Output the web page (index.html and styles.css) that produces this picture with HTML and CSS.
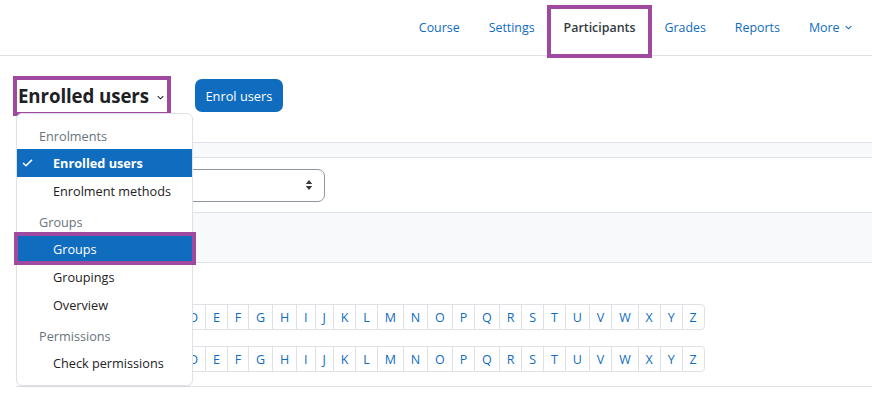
FILE: index.html
```html
<!DOCTYPE html>
<html lang="en">
<head>
<meta charset="utf-8">
<title>Participants</title>
<link rel="stylesheet" href="styles.css">
</head>
<body>
<header class="topbar">
  <nav class="secnav">
    <a class="navlink">Course</a>
    <a class="navlink">Settings</a>
    <a class="navlink active hl">Participants</a>
    <a class="navlink">Grades</a>
    <a class="navlink">Reports</a>
    <a class="navlink more">More <svg class="chev" viewBox="0 0 8 5" width="7" height="5"><path d="M0.8 0.8 L4 4 L7.2 0.8" fill="none" stroke="currentColor" stroke-width="1.2"/></svg></a>
  </nav>
</header>
<main class="page">
  <div class="tertiary">
    <div class="urlselect">
      <div class="heading-select hl">
        <h2 class="title">Enrolled users</h2>
        <svg class="chev dark" viewBox="0 0 8 5" width="7" height="5"><path d="M0.8 0.8 L4 4 L7.2 0.8" fill="none" stroke="currentColor" stroke-width="1.2"/></svg>
      </div>
      <div class="menu">
        <div class="menu-header">Enrolments</div>
        <a class="menu-item active"><svg class="check" viewBox="0 0 12 9" width="11" height="8"><path d="M1 4.5 L4.3 7.6 L11 1" fill="none" stroke="#fff" stroke-width="1.8"/></svg>Enrolled users</a>
        <a class="menu-item">Enrolment methods</a>
        <div class="menu-header sep">Groups</div>
        <a class="menu-item selected hl">Groups</a>
        <a class="menu-item">Groupings</a>
        <a class="menu-item">Overview</a>
        <div class="menu-header sep">Permissions</div>
        <a class="menu-item">Check permissions</a>
      </div>
    </div>
    <button class="btn-primary">Enrol users</button>
  </div>

  <div class="band thin"></div>
  <div class="filter-row">
    <div class="select">
      <svg class="updown" viewBox="0 0 8 12" width="8" height="12"><path d="M4 1 L7.2 5 L0.8 5 Z M4 11 L7.2 7 L0.8 7 Z" fill="#343a40"/></svg>
    </div>
  </div>
  <div class="band tall"></div>

  <div class="initials">
    <div class="initialbar">
      <ul class="pagination">
        <li>D</li><li>E</li><li>F</li><li>G</li><li>H</li><li>I</li><li>J</li><li>K</li><li>L</li><li>M</li><li>N</li><li>O</li><li>P</li><li>Q</li><li>R</li><li>S</li><li>T</li><li>U</li><li>V</li><li>W</li><li>X</li><li>Y</li><li>Z</li>
      </ul>
    </div>
    <div class="initialbar">
      <ul class="pagination">
        <li>D</li><li>E</li><li>F</li><li>G</li><li>H</li><li>I</li><li>J</li><li>K</li><li>L</li><li>M</li><li>N</li><li>O</li><li>P</li><li>Q</li><li>R</li><li>S</li><li>T</li><li>U</li><li>V</li><li>W</li><li>X</li><li>Y</li><li>Z</li>
      </ul>
    </div>
  </div>
</main>
</body>
</html>
```
FILE: styles.css
```css
* { box-sizing: border-box; }
html, body { margin: 0; padding: 0; background: #fff; }
body {
  font-family: "Open Sans", "Noto Sans", "Liberation Sans", sans-serif;
  font-size: 12.5px;
  color: #1d2125;
  width: 872px;
  height: 395px;
  overflow: hidden;
}

/* highlight annotation boxes */
.hl { position: relative; }
.hl::after {
  content: "";
  position: absolute;
  border: 4px solid #9f4aa0;
  pointer-events: none;
}

/* top secondary navigation */
.topbar {
  height: 56px;
  border-bottom: 1px solid #dee2e6;
  display: flex;
  justify-content: flex-end;
}
.secnav {
  display: flex;
  align-items: stretch;
  padding-right: 6px;
}
.navlink {
  display: flex;
  align-items: center;
  padding: 0 14.5px 1px;
  color: #0f6cbf;
  text-decoration: none;
  font-size: 12.4px;
}
.navlink.active {
  color: #343a40;
  font-weight: 600;
}
.navlink.active::after { left: -2px; right: -2px; top: 5px; bottom: -3px; }
.navlink.more .chev { margin-left: 5px; margin-top: 1px; }

/* page content */
.page { padding-left: 16px; position: relative; }
.tertiary {
  display: flex;
  align-items: center;
  margin-top: 23px;
  height: 33px;
}
.urlselect { position: relative; }
.heading-select {
  display: flex;
  align-items: center;
  padding: 0 6px 0 2px;
  height: 33px;
}
.heading-select::after { left: -3px; right: -1px; top: -3px; bottom: -4px; }
.title {
  margin: 0;
  font-size: 18.7px;
  font-weight: 700;
  color: #1d2125;
  letter-spacing: -0.1px;
}
.chev.dark { color: #1d2125; margin-left: 8px; margin-top: 4px; }
.btn-primary {
  margin-left: 25px;
  height: 33px;
  width: 88px;
  padding: 0;
  border: none;
  border-radius: 7px;
  background: #0f6cbf;
  color: #fff;
  font-family: inherit;
  font-size: 12.8px;
}

/* dropdown menu (overlay) */
.menu {
  position: absolute;
  left: 0;
  top: 34px;
  width: 177px;
  background: #fff;
  border: 1px solid #dee2e6;
  border-radius: 6px;
  padding: 8px 0 8px;
  z-index: 5;
  box-shadow: 0 1px 2px rgba(0,0,0,0.04);
}
.menu-header {
  height: 27px;
  display: flex;
  align-items: center;
  padding-left: 22px;
  color: #6a737b;
  font-size: 12.7px;
}
.menu-header.sep { margin-top: 3px; }
.menu-item {
  height: 28px;
  display: flex;
  align-items: center;
  padding-left: 36px;
  color: #1d2125;
  font-size: 12.7px;
  text-decoration: none;
  position: relative;
}
.menu-item.active, .menu-item.selected {
  background: #0f6cbf;
  color: #fff;
}
.menu-item.active { font-weight: 700; }
.check { position: absolute; left: 5px; top: 10px; }
.menu-item.selected::after { left: -3px; right: -4px; top: -3px; bottom: -2px; }

/* background bands */
.band {
  background: #f8f9fa;
  border-top: 1px solid #dee2e6;
  border-bottom: 1px solid #dee2e6;
}
.band.thin { margin-top: 30px; height: 16px; }
.band.tall { height: 51px; }
.filter-row {
  height: 54px;
  display: flex;
  align-items: center;
  padding-left: 80px;
}
.select {
  width: 229px;
  height: 33px;
  border: 1px solid #8f959e;
  border-radius: 7px;
  display: flex;
  align-items: center;
  justify-content: flex-end;
  padding: 0 11px 0 12px;
}

/* initials bars */
.initials { padding-top: 41px; border-bottom: 1px solid #dee2e6; padding-bottom: 14px; }
.initialbar { display: flex; align-items: center; height: 26px; padding-left: 165px; }
.initialbar + .initialbar { margin-top: 16px; }
.pagination {
  display: flex;
  list-style: none;
  margin: 0;
  padding: 0;
}
.pagination li {
  height: 26px;
  padding: 0 6.95px;
  display: flex;
  align-items: center;
  border: 1px solid #dee2e6;
  margin-left: -1px;
  color: #0f6cbf;
  font-size: 12.5px;
  background: #fff;
}
.pagination li:first-child { margin-left: 0; }
.pagination li:last-child { border-radius: 0 4px 4px 0; }
```
